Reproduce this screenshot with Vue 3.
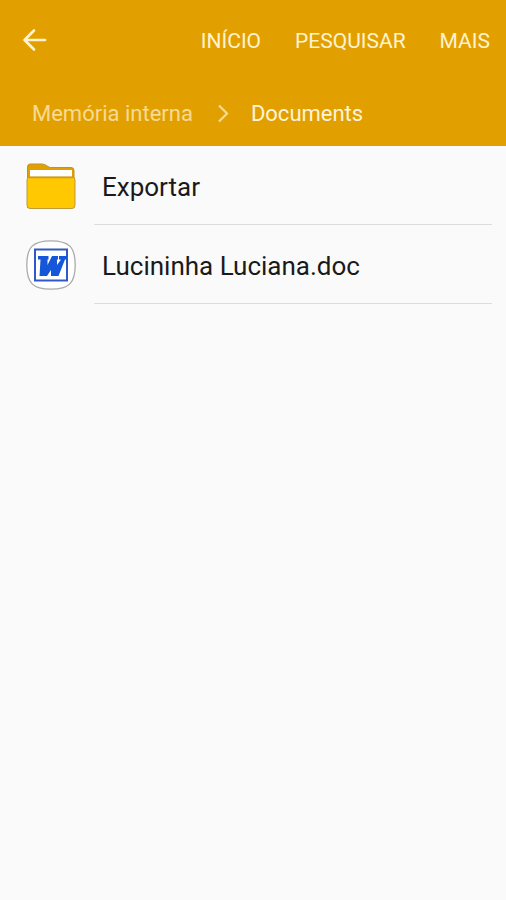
<script setup>
import { ref } from 'vue'

const actions = ref(['INÍCIO', 'PESQUISAR', 'MAIS'])
const files = ref([
  { name: 'Exportar', kind: 'folder' },
  { name: 'Lucininha Luciana.doc', kind: 'doc' },
])
</script>

<template>
  <div class="screen">
    <header class="header">
      <div class="toolbar">
        <button class="back" type="button" aria-label="Voltar">
          <svg width="26" height="26" viewBox="0 0 26 26" fill="none" stroke="currentColor" stroke-width="2.6" stroke-linecap="round" stroke-linejoin="round">
            <path d="M23 12H3M12 2.500L2.500 12L12 21.500" />
          </svg>
        </button>
        <div class="actions">
          <button v-for="action in actions" :key="action" class="action" type="button">{{ action }}</button>
        </div>
      </div>
      <nav class="path">
        <a class="crumb" href="#">Memória interna</a>
        <svg class="chevron" width="12" height="20" viewBox="0 0 12 20" fill="none" stroke="currentColor" stroke-width="2.2">
          <path d="M2 1.500L10 9.500L2 17.500" />
        </svg>
        <a class="crumb current" href="#" aria-current="page">Documents</a>
      </nav>
    </header>
    <main>
      <ul class="list">
        <li v-for="file in files" :key="file.name" class="row">
          <svg v-if="file.kind === 'folder'" class="icon" width="50" height="50" viewBox="0 -1 50 50">
            <path d="M1.500 46V5Q1.500 2 4 2H16Q19 2 21 4L24 5.500H45Q48 5.500 48 8.500V18H1.500Z" fill="#e2a000" stroke="#bd9233" />
            <rect x="4" y="8" width="42" height="8" fill="#fff" />
            <path d="M1 18Q1 15 4 15H46Q49 15 49 18V43Q49 46.500 46 46.500H4Q1 46.500 1 43Z" fill="#ffc800" stroke="#bd9a3c" />
            <path d="M3 15.500H47" stroke="#d99c00" stroke-width="1.500" />
          </svg>
          <svg v-else class="icon" width="50" height="50" viewBox="0 0 50 50">
            <path d="M25 .8C43 .8 49.200 7 49.200 25S43 49.200 25 49.200S.8 43 .8 25S7 .8 25 .8Z" fill="#fff" stroke="#aaa" stroke-width="1.300" />
            <rect x="9" y="9.500" width="32" height="31" fill="#fff" stroke="#3158c8" stroke-width="2" />
            <path d="M12 16H22.500V19.500H21.500V25L26 16H32V19.500H31V25L35 19.500H33V16H41V19.500H39L32.500 36H25V30L21 36H13.500L14.500 19.500H12Z" fill="#1557d8" />
          </svg>
          <a class="name" href="#">{{ file.name }}</a>
        </li>
      </ul>
    </main>
  </div>
</template>

<style>
body {
  margin: 0;
  background: #fafafa;
}
</style>

<style scoped>
.screen {
  min-height: 100vh;
  background: #fafafa;
  font-family: Roboto, sans-serif;
}

.header {
  background: #e2a000;
  color: #fff3cf;
}

.toolbar {
  display: flex;
  align-items: center;
  justify-content: space-between;
  height: 82px;
  padding: 0 16px 0 22px;
}

button {
  padding: 0;
  border: 0;
  background: none;
  color: inherit;
  font: inherit;
}

.back {
  display: flex;
}

.actions {
  display: flex;
  gap: 34px;
}

.action {
  font-size: 21px;
  line-height: 28px;
}

.path {
  display: flex;
  align-items: center;
  height: 64px;
  padding: 0 32px;
  font-size: 22px;
  line-height: 28px;
}

.crumb {
  color: #f8da94;
  text-decoration: none;
}

.chevron {
  margin: 0 22px 0 24px;
  color: #f8da94;
}

.current {
  color: #fff3d8;
}

.list {
  margin: 0;
  padding: 0;
  list-style: none;
}

.row {
  display: flex;
  align-items: center;
  gap: 18px;
  height: 79px;
  padding: 0 14px 0 26px;
}

.icon {
  flex: none;
}

.name {
  box-sizing: border-box;
  flex: 1;
  height: 79px;
  padding: 4px 8px 0;
  border-bottom: 1px solid #dcdcdc;
  color: #1a1a1a;
  font-size: 26px;
  line-height: 74px;
  text-decoration: none;
}
</style>
